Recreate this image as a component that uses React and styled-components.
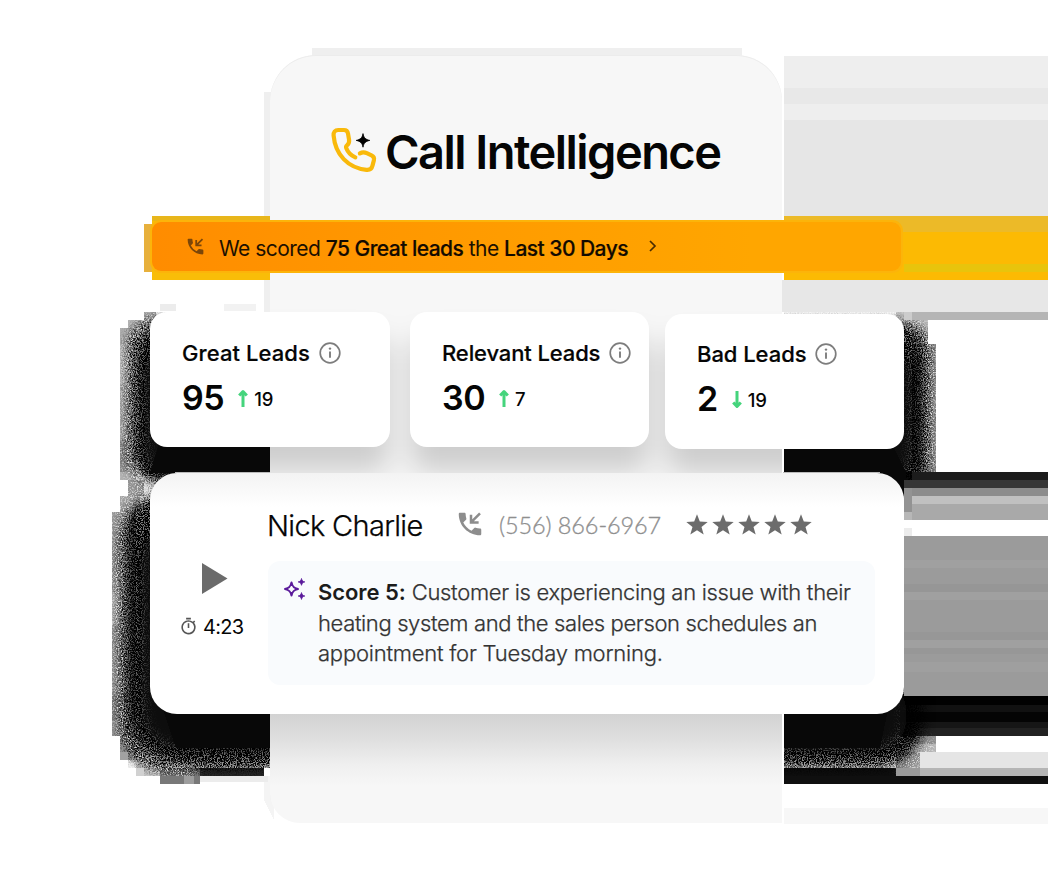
import React from "react";
import styled, { createGlobalStyle } from "styled-components";
import { MdOutlineTimer } from "react-icons/md";

const GlobalStyle = createGlobalStyle`
  * { box-sizing: border-box; }
  body { margin: 0; background: #fff; font-family: Inter, "Liberation Sans", sans-serif; color: #050505; }
`;

const Stage = styled.main`
  position: relative;
  display: grid;
  grid-template-columns: 1050px;
  width: 1050px;
  height: 876px;
  overflow: hidden;
  background: #fff;
`;

const Backdrop = styled.svg`
  position: absolute;
  inset: 0;
`;

const Panel = styled.div`
  grid-area: 1 / 1;
  position: relative;
  width: 512px;
  height: 768px;
  margin: 55px 0 0 270px;
  border-radius: 46px 46px 0 30px;
  background: #f7f7f7;
  box-shadow: inset 0 1px 0 #ececec;
  overflow: hidden;
`;

const PanelShade = styled.svg`
  display: block;
`;

const Content = styled.div`
  grid-area: 1 / 1;
  position: relative;
  display: flex;
  flex-direction: column;
  width: 755px;
  margin-left: 150px;
  padding-top: 124px;
`;

const Heading = styled.h1`
  display: flex;
  align-items: flex-start;
  gap: 7px;
  height: 56px;
  margin: 0 0 42px 180px;
  font-size: 47px;
  font-weight: 600;
  line-height: 56px;
  letter-spacing: -1.55px;
  white-space: nowrap;

  svg { flex: none; margin-top: 1px; }
`;

const Banner = styled.section`
  display: flex;
  align-items: center;
  width: 749px;
  height: 49px;
  margin: 0 0 41px 2px;
  padding: 4px 0 0 33px;
  border-radius: 9px;
  background: linear-gradient(90deg, #ff8c00 0, #ff9600 200px, #ffa600 600px, #ffa600 100%);
  box-shadow: 0 0 0 2px #fcb40a;
  color: #1c1000;
  font-size: 21px;
  font-weight: 400;
  line-height: 28px;
  letter-spacing: -0.53px;

  strong { font-weight: 500; color: #120a00; -webkit-text-stroke: 0.2px; }
  > svg:first-child { margin: -4px 13px 0 0; color: #7b4609; }
  > svg:last-child { margin: -5px 0 0 20px; }
`;

const Cards = styled.section`
  display: flex;
  align-items: flex-start;
  height: 161px;
`;

const StatCard = styled.article`
  width: ${(p) => p.$width}px;
  height: 135px;
  margin: ${(p) => p.$drop || 0}px ${(p) => p.$gap || 0}px 0 0;
  padding: ${(p) => (p.$drop ? 25 : 26)}px 0 0 32px;
  border-radius: 17px;
  background: #fff;
`;

const StatLabel = styled.h2`
  display: flex;
  align-items: center;
  gap: 9px;
  height: 30px;
  margin: 0;
  font-size: 22px;
  font-weight: 500;
  line-height: 30px;
  letter-spacing: ${(p) => p.$track || 0}px;
  white-space: nowrap;
  -webkit-text-stroke: 0.2px;

  svg { flex: none; margin-top: -1px; }
`;

const StatRow = styled.div`
  display: flex;
  align-items: center;
  height: 40px;
  margin-top: 10px;

  svg { flex: none; margin: 1px 6px 0 ${(p) => p.$lead}px; }
`;

const Value = styled.strong`
  font-size: 34px;
  font-weight: 600;
  line-height: 40px;
  letter-spacing: -0.5px;
`;

const Delta = styled.span`
  padding-top: 1px;
  font-size: 18.5px;
  font-weight: 500;
  line-height: 26px;
`;

const CallCard = styled.section`
  display: grid;
  grid-template-columns: 118px 1fr;
  height: 241px;
  width: 754px;
  border-radius: 27px;
  background: linear-gradient(#f3f3f3 0, #fff 34px);
`;

const Playback = styled.div`
  display: flex;
  flex-direction: column;
  align-items: flex-start;
  padding: 90px 0 0 29px;

  > svg { margin-left: 23px; }
`;

const Duration = styled.span`
  display: flex;
  align-items: center;
  gap: 5px;
  height: 28px;
  margin-top: 19px;
  font-size: 20px;
  letter-spacing: -0.7px;

  svg { color: #555; margin-top: -2px; }
`;

const Details = styled.div`
  display: flex;
  flex-direction: column;
`;

const Caller = styled.header`
  display: flex;
  align-items: center;
  height: 88px;
  padding-top: 15px;
`;

const Name = styled.h3`
  width: 188px;
  margin: 2px 0 0 -1px;
  font-size: 29px;
  font-weight: 300;
  line-height: 36px;
  letter-spacing: -0.68px;
  white-space: nowrap;
  -webkit-text-stroke: 0.25px;
`;

const Phone = styled.span`
  display: flex;
  align-items: center;
  gap: 14px;
  width: 231px;
  color: #8f8f8f;
  font-family: Lato, sans-serif;
  font-size: 23.5px;
  font-weight: 300;
  letter-spacing: -0.1px;
  white-space: nowrap;
  -webkit-text-stroke: 0.3px;

  svg { color: #8d8d8d; margin-top: -1px; }
`;

const Stars = styled.span`
  display: flex;
  gap: 4px;
`;

const Note = styled.div`
  display: flex;
  gap: 11px;
  width: 607px;
  height: 124px;
  padding: 16px 0 0 15px;
  border-radius: 12px;
  background: #f9fbfd;

  > svg { flex: none; margin-top: -1px; }
`;

const NoteText = styled.p`
  margin: 0;
  color: #333;
  font-size: 22px;
  font-weight: 300;
  line-height: 30.5px;
  white-space: nowrap;
  -webkit-text-stroke: 0.25px;

  strong { color: #1b1b1b; font-weight: 600; letter-spacing: -0.05px; -webkit-text-stroke: 0; }
`;

const Line = styled.span`
  display: block;
  letter-spacing: ${(p) => p.$track}px;
`;

const rightBands = [
  [784, 56, 264, 32, "#eeeeee"], [784, 88, 264, 16, "#e8e8e8"], [784, 104, 264, 16, "#eeeeee"],
  [784, 120, 264, 96, "#e6e6e6"], [782, 280, 266, 32, "#e7e7e7"],
  [896, 312, 152, 8, "#cccccc"], [912, 312, 136, 8, "#b5b5b5"],
  [784, 216, 264, 16, "#ecba28"], [784, 232, 264, 48, "#fcba03"], [904, 264, 144, 8, "#e8c40c"],
  [904, 472, 144, 8, "#1c1c1c"], [904, 480, 144, 8, "#363636"], [904, 488, 144, 8, "#8c8c8c"],
  [904, 496, 144, 8, "#c0c0c0"], [904, 504, 144, 16, "#a9a9a9"],
  [904, 536, 144, 160, "#9b9b9b"], [904, 560, 144, 8, "#a0a0a0"], [904, 584, 144, 8, "#969696"],
  [904, 592, 144, 8, "#a0a0a0"], [904, 632, 144, 8, "#979797"], [904, 640, 144, 8, "#a0a0a0"],
  [904, 648, 144, 6, "#979797"], [904, 662, 144, 10, "#9f9f9f"],
  [904, 488, 8, 32, "#939393"], [904, 512, 8, 8, "#b7b7b7"], [904, 528, 8, 8, "#ececec"],
  [900, 696, 148, 9, "#010101"], [900, 705, 148, 7, "#111111"], [900, 712, 148, 10, "#040404"],
  [900, 722, 148, 14, "#161616"], [912, 728, 136, 8, "#222222"],
  [920, 752, 128, 16, "#e5e5e5"], [912, 768, 136, 8, "#b5b5b5"], [784, 768, 112, 8, "#0f0f0f"],
  [784, 776, 264, 8, "#0f0f0f"], [784, 808, 264, 16, "#f7f7f7"],
  [904, 320, 24, 8, "#c4c4c4"], [912, 328, 16, 16, "#cccccc"], [912, 344, 24, 128, "#a0a0a0"],
  [920, 464, 16, 8, "#9b9b9b"], [904, 736, 32, 8, "#8f8f8f"], [896, 744, 40, 8, "#b5b5b5"],
  [896, 752, 24, 24, "#9a9a9a"],
];

const leftBlocks = [
  [152, 216, 118, 64, "#f9bd08"], [152, 216, 118, 5, "#e8b61b"], [144, 224, 8, 48, "#e7b03c"],
  [144, 312, 12, 8, "#a9a9a9"], [128, 320, 24, 8, "#bdbdbd"], [120, 328, 16, 152, "#b3b3b3"],
  [120, 344, 8, 40, "#c9c9c9"], [120, 440, 8, 32, "#8f8f8f"], [128, 480, 16, 16, "#969696"],
  [120, 496, 20, 16, "#a6a6a6"], [112, 512, 24, 224, "#9d9d9d"], [112, 592, 8, 32, "#b9b9b9"],
  [112, 696, 8, 24, "#838383"], [120, 736, 24, 24, "#a1a1a1"], [136, 760, 30, 16, "#d1d1d1"],
  [160, 768, 40, 16, "#787878"], [184, 776, 10, 8, "#9d9d9d"],
  [200, 768, 64, 8, "#2c2c2c"], [200, 776, 68, 6, "#ececec"],
  [160, 304, 16, 7, "#ececec"], [224, 304, 32, 7, "#f2f2f2"],
];

function Scenery() {
  return (
    <Backdrop width="1050" height="876" viewBox="0 0 1050 876" shapeRendering="crispEdges">
      <defs>
        <filter id="grain" x="90" y="290" width="870" height="510" filterUnits="userSpaceOnUse" colorInterpolationFilters="sRGB">
          <feGaussianBlur in="SourceGraphic" stdDeviation="7" result="soft" />
          <feTurbulence type="fractalNoise" baseFrequency="0.85" numOctaves="2" seed="4" />
          <feColorMatrix values="0 0 0 0 0  0 0 0 0 0  0 0 0 0 0  3 0 0 0 -1.1" result="noise" />
          <feComposite in="soft" in2="noise" operator="arithmetic" k1="1.1" k2="0.5" />
        </filter>
        <filter id="core" x="90" y="290" width="870" height="510" filterUnits="userSpaceOnUse">
          <feGaussianBlur stdDeviation="7" />
        </filter>
        <filter id="speckle" x="90" y="290" width="870" height="510" filterUnits="userSpaceOnUse" colorInterpolationFilters="sRGB">
          <feGaussianBlur in="SourceGraphic" stdDeviation="4" result="soft" />
          <feTurbulence type="fractalNoise" baseFrequency="0.8" numOctaves="2" seed="9" />
          <feColorMatrix values="0 0 0 0 0.9  0 0 0 0 0.9  0 0 0 0 0.9  4 0 0 0 -1.9" result="noise" />
          <feComposite in="noise" in2="soft" operator="in" />
        </filter>
        <clipPath id="halo">
          <path d="M152 312H270V768H264V776H200V776H160V776H144V768H128V752H120V736H112V512H120V496H128V480H120V328H128V320H144V312Z" />
          <path d="M784 312H904V320H928V344H936V472H912V480H904V696H936V752H920V768H896V776H784Z" />
        </clipPath>
      </defs>
      <rect x="312" y="48" width="430" height="8" fill="#efefef" />
      <rect x="264" y="92" width="7" height="124" fill="#efefef" />
      <rect x="264" y="280" width="7" height="32" fill="#efefef" />
      <path d="M264 776h10v44l-10-20z" fill="#f4f4f4" />
      {[...rightBands, ...leftBlocks].map(([x, y, w, h, fill], i) => (
        <rect key={i} x={x} y={y} width={w} height={h} fill={fill} />
      ))}
      <g clipPath="url(#halo)">
        <g filter="url(#grain)">
          <rect x="128" y="320" width="180" height="162" rx="28" />
          <rect x="120" y="494" width="180" height="276" rx="44" />
          <rect x="740" y="322" width="190" height="172" rx="28" />
          <rect x="740" y="640" width="182" height="128" rx="44" />
        </g>
        <g fill="none" stroke="#fff" strokeWidth="16" filter="url(#speckle)">
          <path d="M160 316Q128 326 128 366V450Q128 474 144 488Q120 500 119 530V700Q122 772 196 774" />
          <path d="M908 312Q930 334 931 370V474" />
          <path d="M934 742Q922 764 900 770" />
        </g>
        <g filter="url(#core)">
          <rect x="145" y="344" width="160" height="134" rx="26" fill="#080808" />
          <rect x="142" y="526" width="170" height="222" rx="34" fill="#080808" />
          <rect x="740" y="350" width="172" height="132" rx="26" fill="#080808" />
          <rect x="740" y="680" width="166" height="70" rx="30" fill="#080808" />
        </g>
        <path d="M160 440H270V473H150zM160 700H270V748H176zM784 440H890L906 472 908 500 880 474H784zM784 700H890L880 748H784z" fill="#080808" />
      </g>
      <path d="M175 472.500h95M783 472.500h97" stroke="#bbb" />
    </Backdrop>
  );
}

function Shade() {
  return (
    <PanelShade width="512" height="768" viewBox="270 55 512 768">
      <defs>
        <linearGradient id="foot" x1="0" y1="0" x2="0" y2="1">
          <stop offset="0" stopColor="#d2d2d2" />
          <stop offset="0.35" stopColor="#dfdfdf" />
          <stop offset="0.7" stopColor="#efefef" />
          <stop offset="1" stopColor="#f7f7f7" />
        </linearGradient>
        <filter id="cast" x="100" y="280" width="860" height="260" filterUnits="userSpaceOnUse">
          <feGaussianBlur stdDeviation="14" />
        </filter>
      </defs>
      <g fill="#000" fillOpacity="0.17" filter="url(#cast)">
        <rect x="150" y="338" width="240" height="134" rx="17" />
        <rect x="410" y="338" width="240" height="134" rx="17" />
        <rect x="665" y="340" width="240" height="134" rx="17" />
      </g>
      <rect x="270" y="714" width="512" height="72" fill="url(#foot)" />
    </PanelShade>
  );
}

const CallMark = () => (
  <svg width="48" height="48" viewBox="0 0 48 48" fill="none">
    <path
      d="M25.300 32.400C21 30.500 18 27.500 16.300 23.200c-.5-1.200-.1-2.300.9-3.100 2-1.600 2.300-3.300 1.800-5.600l-1-6C17.600 6 16.200 5 14 5H8.300C5 5 3.300 7.200 3.600 10.500 5.200 29.500 18 43 36.500 44.800c3.300.3 5.300-1.100 6-4.200l1.400-5.400c.5-2.300-.4-3.900-2.400-4.800l-4.700-2.200c-2.200-1-4.700-1-6.900.2"
      stroke="#f9b90b" strokeWidth="4.200" strokeLinecap="round" strokeLinejoin="round"
    />
    <path d="M33 8.600c.8 4.200 2.500 5.900 6.800 6.800-4.300.9-6 2.600-6.800 6.800-.8-4.200-2.500-5.900-6.800-6.800 4.300-.9 6-2.600 6.800-6.800Z" fill="#000" stroke="#000" strokeWidth=".8" />
  </svg>
);

const IncomingCall = ({ size }) => (
  <svg width={size} height={size} viewBox="0 0 24 24" fill="none">
    <path d="M20 15.500c-1.250 0-2.450-.2-3.570-.57a1.020 1.020 0 0 0-1.020.24l-2.200 2.200a15.045 15.045 0 0 1-6.590-6.590l2.200-2.210a.96.96 0 0 0 .25-1A11.360 11.360 0 0 1 8.500 4c0-.55-.45-1-1-1H4c-.55 0-1 .45-1 1 0 9.390 7.610 17 17 17 .55 0 1-.45 1-1v-3.500c0-.55-.45-1-1-1Z" fill="currentColor" />
    <path d="m20 3.500-7 7M12.800 4.600v6.100h6.100" stroke="currentColor" strokeWidth="2" />
  </svg>
);

const InfoMark = () => (
  <svg width="22" height="22" viewBox="0 0 22 22" fill="none" stroke="#7d7d7d">
    <circle cx="11" cy="11" r="9.800" strokeWidth="1.700" />
    <path d="M11 9.500v6.200" strokeWidth="1.900" />
    <circle cx="11" cy="6.600" r="1.200" fill="#7d7d7d" stroke="none" />
  </svg>
);

const Trend = ({ down }) => (
  <svg width="10" height="19" viewBox="0 0 10 19" fill="none" stroke="#45d47c" strokeWidth="3">
    <path d={down ? "M5 1v16M1.200 12.500 5 16.500l3.800-4" : "M5 18V2M1.200 6.500 5 2.500l3.800 4"} strokeLinejoin="round" />
  </svg>
);

const Sparkles = () => (
  <svg width="24" height="26" viewBox="0 0 24 26" fill="none" stroke="#5b1a9b">
    <path d="M8.500 6.500c.9 4.100 2.300 5.600 6.500 6.500-4.200.9-5.600 2.300-6.500 6.500C7.600 15.300 6.200 13.900 2 13c4.200-.9 5.600-2.400 6.500-6.500Z" strokeWidth="2" strokeLinejoin="round" />
    <path d="M18.500 2.500c.5 2.200 1.200 2.900 3.300 3.400-2.100.5-2.800 1.200-3.300 3.400-.5-2.200-1.200-2.900-3.300-3.400 2.100-.5 2.800-1.200 3.300-3.400ZM18.500 16.600c.5 2.200 1.200 2.900 3.300 3.400-2.100.5-2.800 1.200-3.300 3.400-.5-2.200-1.200-2.900-3.300-3.400 2.100-.5 2.800-1.200 3.300-3.400Z" fill="#5b1a9b" strokeWidth=".8" />
  </svg>
);

const Star = () => (
  <svg width="22" height="22" viewBox="0 0 22 22">
    <path d="m11 .3 2.800 7.300 7.900.3-6.200 5 2.200 7.700-6.700-4.400-6.700 4.400 2.200-7.700-6.200-5 7.900-.3Z" fill="#6c6c6c" />
  </svg>
);

const stats = [
  { label: "Great Leads", value: 95, delta: 19, width: 240, gap: 20, track: 0.08, lead: 14 },
  { label: "Relevant Leads", value: 30, delta: 7, width: 239, gap: 16, track: -0.12, lead: 14 },
  { label: "Bad Leads", value: 2, delta: 19, width: 239, drop: 2, track: -0.05, lead: 14, down: true },
];

export default function App() {
  return (
    <Stage>
      <GlobalStyle />
      <Scenery />
      <Panel><Shade /></Panel>
      <Content>
        <Heading><CallMark />Call Intelligence</Heading>
        <Banner>
          <IncomingCall size={21} />
          <span>We scored <strong>75 Great leads</strong> the <strong>Last 30 Days</strong></span>
          <svg width="10" height="14" viewBox="0 0 10 14" fill="none" stroke="#4a2c00" strokeWidth="1.700">
            <path d="m2 2 5 5-5 5" />
          </svg>
        </Banner>
        <Cards>
          {stats.map((s) => (
            <StatCard key={s.label} $width={s.width} $gap={s.gap} $drop={s.drop}>
              <StatLabel $track={s.track}>{s.label}<InfoMark /></StatLabel>
              <StatRow $lead={s.lead}>
                <Value>{s.value}</Value>
                <Trend down={s.down} />
                <Delta>{s.delta}</Delta>
              </StatRow>
            </StatCard>
          ))}
        </Cards>
        <CallCard>
          <Playback>
            <svg width="26" height="31" viewBox="0 0 26 31"><path d="M0 0v31l25.500-15.500Z" fill="#6b6b6b" /></svg>
            <Duration><MdOutlineTimer size={19} />4:23</Duration>
          </Playback>
          <Details>
            <Caller>
              <Name>Nick Charlie</Name>
              <Phone><IncomingCall size={30} />(556) 866-6967</Phone>
              <Stars>{[0, 1, 2, 3, 4].map((n) => <Star key={n} />)}</Stars>
            </Caller>
            <Note>
              <Sparkles />
              <NoteText>
                <Line $track={-0.3}><strong>Score 5:</strong> Customer is experiencing an issue with their</Line>
                <Line $track={-0.37}>heating system and the sales person schedules an</Line>
                <Line $track={-0.22}>appointment for Tuesday morning.</Line>
              </NoteText>
            </Note>
          </Details>
        </CallCard>
      </Content>
    </Stage>
  );
}
